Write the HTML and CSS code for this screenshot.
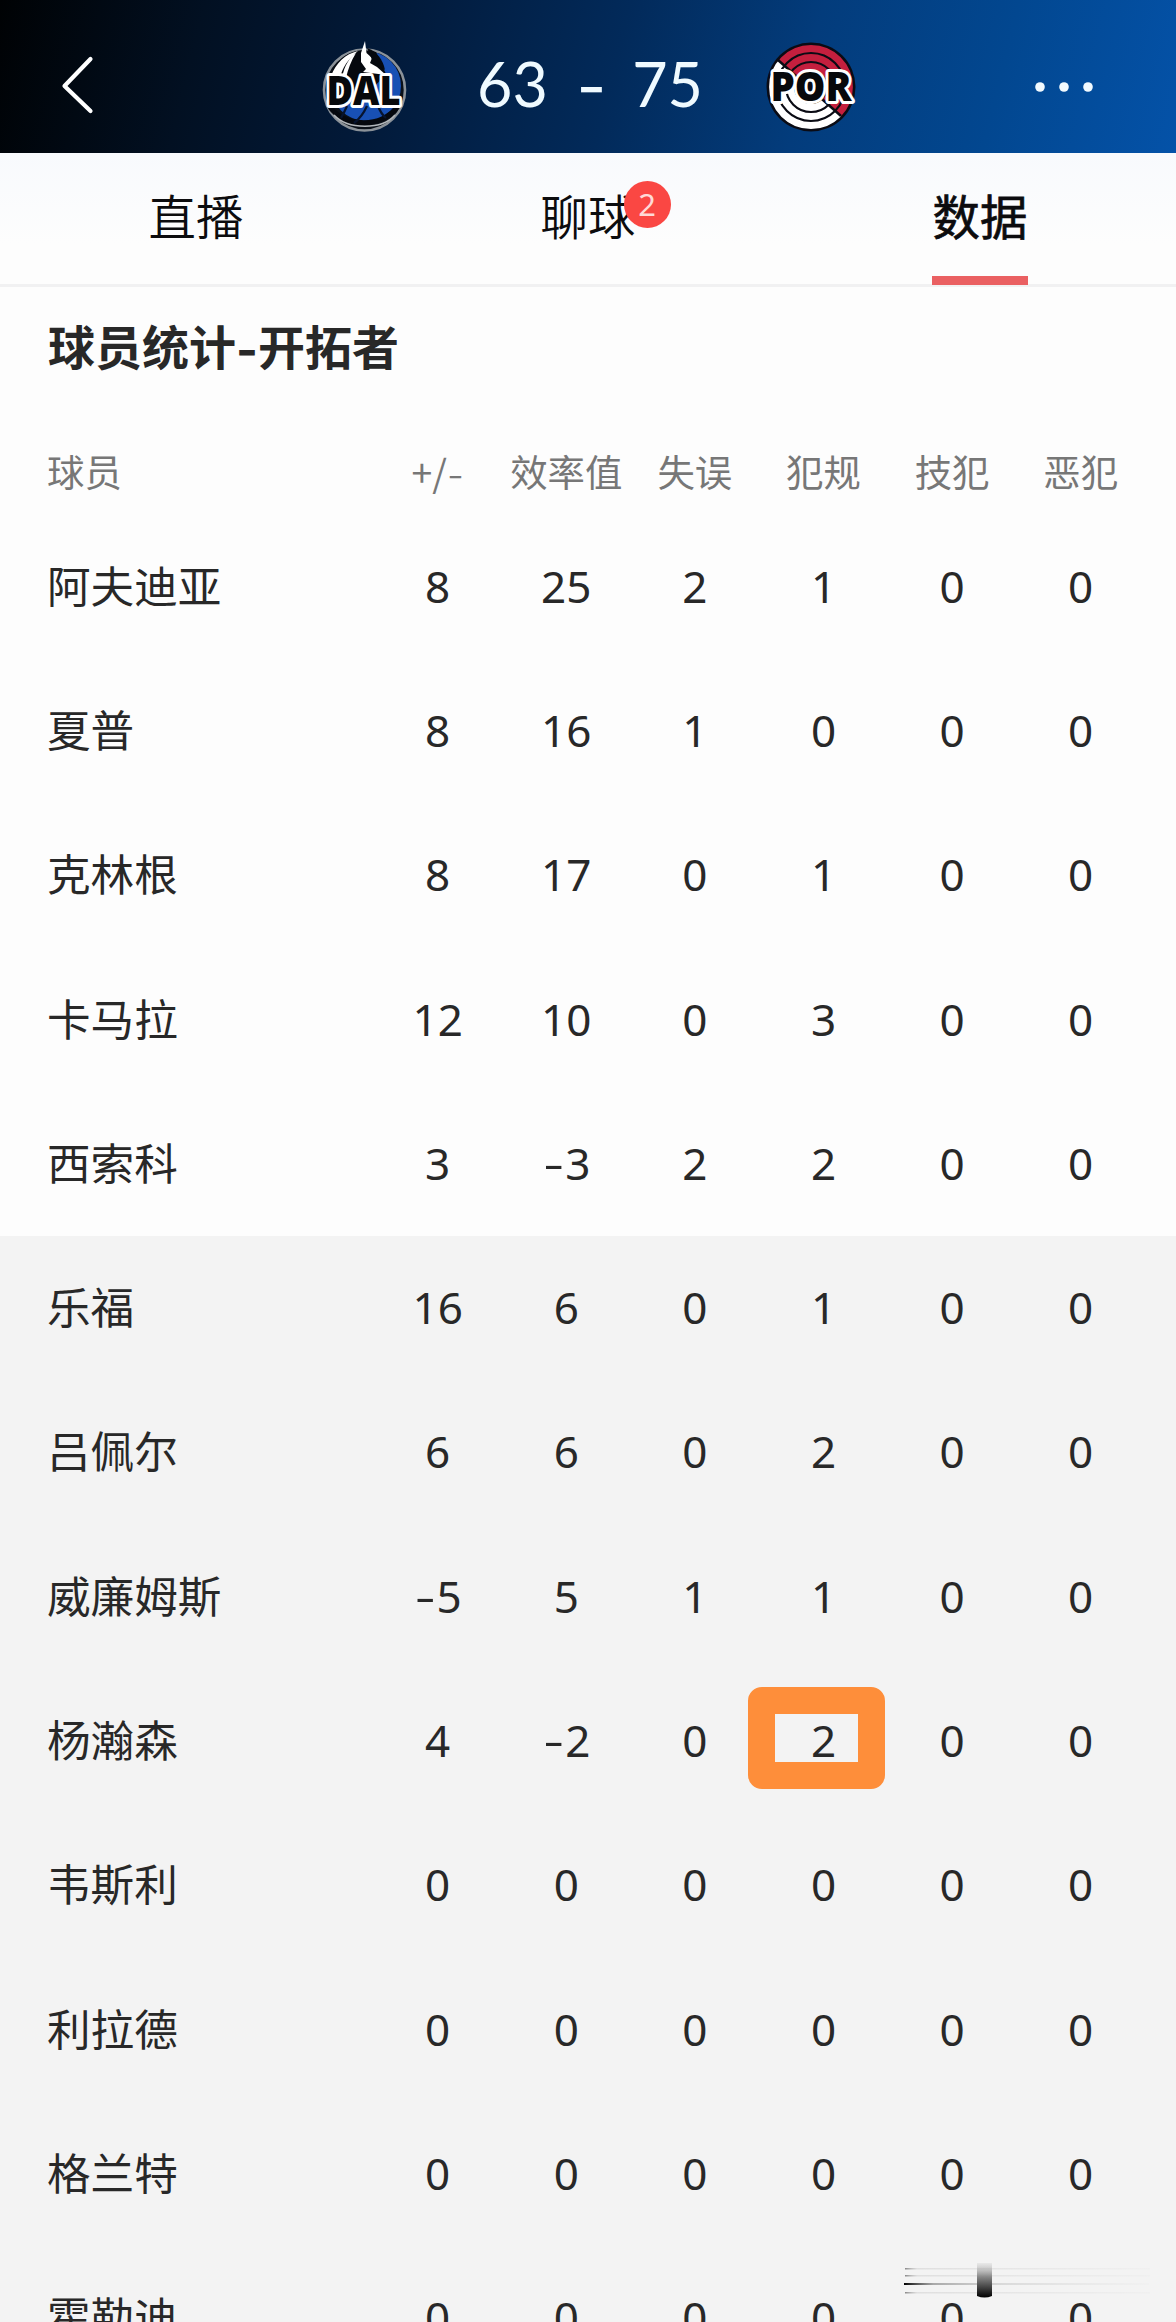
FILE: index.html
```html
<!DOCTYPE html>
<html lang="zh-CN">
<head>
<meta charset="utf-8">
<title>球员统计</title>
<link rel="stylesheet" href="styles.css">
</head>
<body>
<header class="topbar">
  <svg class="back" viewBox="0 0 34 60" width="34" height="60"><path d="M30.500 4 L4.500 31 L30.500 56" fill="none" stroke="#fff" stroke-width="4.200" stroke-linecap="round" stroke-linejoin="round"/></svg>
  <svg class="logo" viewBox="0 0 90 94" width="90" height="94">
    <circle cx="44.500" cy="50" r="40.500" fill="#0a1018" stroke="#8b9299" stroke-width="2.600"/>
    <circle cx="46" cy="46" r="35" fill="#1850b4"/>
    <path d="M9 42 C13 22 26 11 44 10 L56 12 L66 34 L42 60 L8 60Z" fill="#05080e"/>
    <path d="M11 36 C16 23 25 14 38 11 C28 19 22 28 20 38Z M22 38 C24 26 30 17 36 13 C31 21 28 29 26 38Z" fill="#fff"/>
    <path d="M45 1 L46.500 13 L52 18 L50 23 L57 27 L66 35 L43 32 L46 29 L41 22 L41 13Z" fill="#fff"/>
    <path d="M47 8 C57 11 63 20 65 30 L53 22Z" fill="#05080e"/>
    <path d="M10 67 C24 87 62 89 78 66" fill="none" stroke="#05080e" stroke-width="5"/>
    <path d="M14 75 C28 90 62 90 75 75" fill="none" stroke="#b3b7bb" stroke-width="1.600"/>
    <path d="M27 66 Q24 73 21 78 M47 66 Q42 77 34 83 M58 66 Q61 74 66 78" fill="none" stroke="#07142e" stroke-width="2.200"/>
    <text class="logo-text" x="43.500" y="65" textLength="74" lengthAdjust="spacingAndGlyphs" font-size="40">DAL</text>
  </svg>
  <div class="score"><span>63</span><span class="dash">-</span><span>75</span></div>
  <svg class="logo" viewBox="0 0 92 94" width="92" height="94">
    <defs>
      <clipPath id="upper"><path d="M-10 0 L100 97 L100 -10 L-10 -10Z"/></clipPath>
      <clipPath id="lower"><path d="M-10 0 L100 97 L-10 110Z"/></clipPath>
    </defs>
    <circle cx="46" cy="47" r="44.500" fill="#0a0b14"/>
    <g clip-path="url(#upper)" fill="none" stroke="#c41f3e" stroke-width="6.800">
      <circle cx="46" cy="47" r="38.500"/><circle cx="46" cy="47" r="29.500"/><circle cx="46" cy="47" r="20.500"/><circle cx="46" cy="47" r="11"/>
    </g>
    <g clip-path="url(#lower)" fill="none" stroke="#fff" stroke-width="6.800">
      <circle cx="46" cy="47" r="38.500"/><circle cx="46" cy="47" r="29.500"/><circle cx="46" cy="47" r="20.500"/><circle cx="46" cy="47" r="11"/>
    </g>
    <path d="M13 20 L76 76" stroke="#0a0b14" stroke-width="2.500"/>
    <text class="logo-text" x="46" y="61" textLength="81" lengthAdjust="spacingAndGlyphs" font-size="40">POR</text>
  </svg>
  <svg class="more" viewBox="0 0 60 12" width="60" height="12" fill="#f2faff"><circle cx="6" cy="6" r="4.800"/><circle cx="30" cy="6" r="4.800"/><circle cx="54" cy="6" r="4.800"/></svg>
</header>

<nav class="tabs">
  <div class="tab"><span class="label">直播</span></div>
  <div class="tab"><span class="label">聊球<b class="badge">2</b></span></div>
  <div class="tab active"><span class="label">数据</span></div>
</nav>

<main class="stats">
  <h1 class="title">球员统计<span class="hy">-</span>开拓者</h1>
  <div class="row head"><span>球员</span><span>+/<i class="hy">-</i></span><span>效率值</span><span>失误</span><span>犯规</span><span>技犯</span><span>恶犯</span></div>
  <section class="starters">
    <div class="row"><span>阿夫迪亚</span><span>8</span><span>25</span><span>2</span><span>1</span><span>0</span><span>0</span></div>
    <div class="row"><span>夏普</span><span>8</span><span>16</span><span>1</span><span>0</span><span>0</span><span>0</span></div>
    <div class="row"><span>克林根</span><span>8</span><span>17</span><span>0</span><span>1</span><span>0</span><span>0</span></div>
    <div class="row"><span>卡马拉</span><span>12</span><span>10</span><span>0</span><span>3</span><span>0</span><span>0</span></div>
    <div class="row"><span>西索科</span><span>3</span><span><i class="hy">-</i>3</span><span>2</span><span>2</span><span>0</span><span>0</span></div>
  </section>
  <section class="bench">
    <div class="row"><span>乐福</span><span>16</span><span>6</span><span>0</span><span>1</span><span>0</span><span>0</span></div>
    <div class="row"><span>吕佩尔</span><span>6</span><span>6</span><span>0</span><span>2</span><span>0</span><span>0</span></div>
    <div class="row"><span>威廉姆斯</span><span><i class="hy">-</i>5</span><span>5</span><span>1</span><span>1</span><span>0</span><span>0</span></div>
    <div class="row"><span>杨瀚森</span><span>4</span><span><i class="hy">-</i>2</span><span>0</span><span class="marked">2</span><span>0</span><span>0</span></div>
    <div class="row"><span>韦斯利</span><span>0</span><span>0</span><span>0</span><span>0</span><span>0</span><span>0</span></div>
    <div class="row"><span>利拉德</span><span>0</span><span>0</span><span>0</span><span>0</span><span>0</span><span>0</span></div>
    <div class="row"><span>格兰特</span><span>0</span><span>0</span><span>0</span><span>0</span><span>0</span><span>0</span></div>
    <div class="row"><span>霍勒迪</span><span>0</span><span>0</span><span>0</span><span>0</span><span>0</span><span>0</span></div>
  </section>
</main>

<svg class="smudge" viewBox="0 0 250 40" width="250" height="40">
  <defs>
    <linearGradient id="line" x1="0" x2="1"><stop offset="0" stop-color="#000"/><stop offset=".12" stop-color="#777" stop-opacity=".6"/><stop offset=".4" stop-color="#aaa" stop-opacity=".35"/><stop offset="1" stop-color="#ccc" stop-opacity=".05"/></linearGradient>
    <linearGradient id="thin" x1="0" x2="1"><stop offset="0" stop-color="#888"/><stop offset=".05" stop-color="#ccc" stop-opacity=".5"/><stop offset="1" stop-color="#ccc" stop-opacity=".08"/></linearGradient>
    <linearGradient id="bar" x1="0" y1="0" x2="0" y2="1"><stop offset="0" stop-color="#bbb" stop-opacity=".2"/><stop offset=".4" stop-color="#888"/><stop offset=".7" stop-color="#444"/><stop offset="1" stop-color="#000"/></linearGradient>
  </defs>
  <rect x="1" y="8" width="245" height="1.500" fill="url(#thin)"/>
  <rect x="1" y="15" width="245" height="1.500" fill="url(#thin)"/>
  <rect x="0" y="23" width="245" height="2" fill="url(#line)"/>
  <rect x="1" y="32" width="245" height="1.500" fill="url(#thin)"/>
  <path d="M73 3 H88 V36 Q80.500 39 73 36Z" fill="url(#bar)"/>
</svg>
</body>
</html>
```
FILE: styles.css
```css
*,
*::before,
*::after { box-sizing: border-box; }

body {
  margin: 0;
  position: relative;
  width: 1176px;
  height: 2322px;
  overflow: hidden;
  background: #fdfdfd;
  color: #282828;
  font-family: "Noto Sans", "Noto Sans CJK SC", sans-serif;
}

i { font-style: normal; }

.hy { font-family: Inter, sans-serif; }

.row .hy {
  font-size: 1.15em;
  font-weight: 350;
  line-height: 0;
  vertical-align: -0.05em;
}

.topbar {
  display: grid;
  grid-template-columns: 260px 157px 288px 269px 60px;
  align-items: center;
  height: 153px;
  padding: 20px 0 0 60px;
  background: linear-gradient(104deg, #000204 0%, #021022 17%, #021a3a 33%, #022a5a 52%, #033c7c 68%, #024790 84%, #0452a8 100%);
}

.back { margin-top: -3px; }

.logo { display: block; }

.logo-text {
  font-family: "Open Sans", sans-serif;
  font-weight: 800;
  text-anchor: middle;
  fill: #07090c;
  stroke: #fff;
  stroke-width: 6px;
  stroke-linejoin: round;
  paint-order: stroke;
}

.score {
  display: flex;
  justify-content: space-between;
  width: 226px;
  margin-top: -5px;
  color: #effaff;
  font: 400 61px/90px Lato, sans-serif;
}

.score .dash {
  padding-left: 3px;
  font-family: Inter, sans-serif;
  font-size: 65px;
  line-height: 96px;
  height: 90px;
}

.tabs {
  display: grid;
  grid-template-columns: repeat(3, 1fr);
  height: 134px;
  border-bottom: 3px solid #f1f1f2;
  background: linear-gradient(#f8fafd, #fdfdfd 70%);
}

.tab {
  display: flex;
  justify-content: center;
  color: #0c0c0e;
  font: 350 47.4px/123px "Noto Sans CJK SC", sans-serif;
}

.tab.active {
  font-weight: 400;
  -webkit-text-stroke: 0.7px #0c0c0e;
}

.label { position: relative; }

.tab.active .label::after {
  content: "";
  position: absolute;
  left: -1px;
  top: 123px;
  width: 96px;
  height: 9px;
  background: #ea6062;
}

.badge {
  position: absolute;
  left: 83px;
  top: 28px;
  width: 47px;
  height: 47px;
  border-radius: 50%;
  background: #fa4743;
  color: #ffd9d6;
  font: 400 31px/46px "Noto Sans", sans-serif;
  text-align: center;
}

.title {
  margin: 0;
  padding-left: 48px;
  height: 120px;
  font: 700 47px/115px "Noto Sans CJK SC", sans-serif;
}

.title .hy {
  line-height: 0;
  vertical-align: -0.04em;
}

.row {
  display: grid;
  grid-template-columns: 326.4px repeat(6, 128.6px);
  align-items: center;
  height: 144.3px;
  padding: 0 0 3px 47px;
  font-size: 44px;
  line-height: 60px;
  text-align: center;
}

.row > :first-child {
  margin-top: -4px;
  text-align: left;
  font: 400 43.6px/60px "Noto Sans CJK SC", sans-serif;
}

.row.head {
  height: 108px;
  padding-top: 20px;
  padding-bottom: 0;
  color: #777;
  font: 400 37.4px/60px "Noto Sans CJK SC", sans-serif;
}

.row.head > :first-child {
  margin-top: 0;
  font-size: 37.4px;
}

.row.head .hy { font-size: 1em; }

.bench { background: #f3f3f3; }

.marked { position: relative; }

.marked::before {
  content: "";
  position: absolute;
  left: -11.5px;
  top: -23.5px;
  width: 137px;
  height: 102px;
  border: 27px solid #fe8e3a;
  border-radius: 14px;
}

.smudge {
  position: absolute;
  left: 904px;
  top: 2260px;
}
```
